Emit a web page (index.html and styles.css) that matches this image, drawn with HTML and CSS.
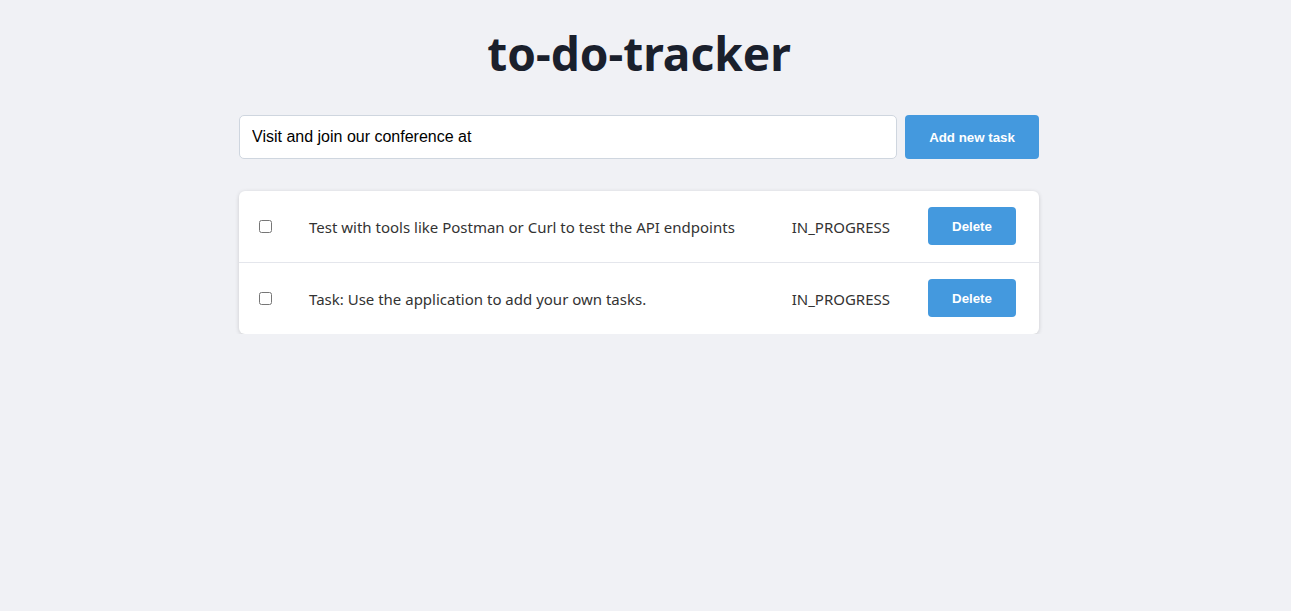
FILE: index.html
```html
<!DOCTYPE html>
<html>
<head>
<meta charset="utf-8">
<link rel="stylesheet" href="styles.css">
</head>
<body>
<div class="app">
  <h1 class="title">to-do-tracker</h1>
  <form class="add-form">
    <input class="task-input" type="text" value="Visit and join our conference at">
    <button class="add-btn" type="button">Add new task</button>
  </form>
  <ul class="task-list">
    <li class="task-row">
      <input class="task-check" type="checkbox">
      <span class="task-text">Test with tools like Postman or Curl to test the API endpoints</span>
      <span class="task-status">IN_PROGRESS</span>
      <button class="del-btn" type="button">Delete</button>
    </li>
    <li class="task-row">
      <input class="task-check" type="checkbox">
      <span class="task-text">Task: Use the application to add your own tasks.</span>
      <span class="task-status">IN_PROGRESS</span>
      <button class="del-btn" type="button">Delete</button>
    </li>
  </ul>
</div>
</body>
</html>
```

FILE: styles.css
```css
html, body {
  margin: 0;
  padding: 0;
  background: #f0f1f5;
}
body {
  font-family: "Noto Sans", "Open Sans", sans-serif;
  color: #333;
  padding-right: 13px;
}
.app {
  width: 800px;
  margin: 0 auto;
  padding-top: 22px;
}
.title {
  margin: 0 0 31px;
  text-align: center;
  font-size: 46px;
  line-height: 62px;
  font-weight: 700;
  color: #1a202c;
}
.add-form {
  display: flex;
  gap: 8px;
  margin: 0 0 32px;
}
.task-input {
  flex: 1;
  height: 44px;
  box-sizing: border-box;
  border: 1px solid #cfd6df;
  border-radius: 5px;
  padding: 0 12px;
  font-family: "Liberation Sans", Arial, sans-serif;
  font-size: 16px;
  color: #000;
  background: #fff;
  outline: none;
}
.add-btn {
  width: 134px;
  height: 44px;
  border: none;
  border-radius: 4px;
  background: #4499de;
  color: #fff;
  font-family: "Liberation Sans", Arial, sans-serif;
  font-weight: 700;
  font-size: 13.3px;
}
.task-list {
  list-style: none;
  margin: 0;
  padding: 0;
  background: #fff;
  border-radius: 6px;
  box-shadow: 0 1px 4px rgba(0,0,0,0.16);
}
.task-row {
  display: flex;
  align-items: center;
  padding: 16px 23px 17px 20px;
  border-bottom: 1px solid #e4e6ec;
}
.task-row:last-child {
  border-bottom: none;
}
.task-check {
  width: 13px;
  height: 13px;
  margin: 0 37px 0 0;
}
.task-text {
  flex: 1;
  font-size: 15px;
  color: #333;
  padding-top: 2px;
}
.task-status {
  font-size: 15px;
  color: #333;
  margin-right: 38px;
  padding-top: 2px;
}
.del-btn {
  width: 88px;
  height: 38px;
  border: none;
  border-radius: 4px;
  background: #4499de;
  color: #fff;
  font-family: "Liberation Sans", Arial, sans-serif;
  font-weight: 700;
  font-size: 13.3px;
}
```
